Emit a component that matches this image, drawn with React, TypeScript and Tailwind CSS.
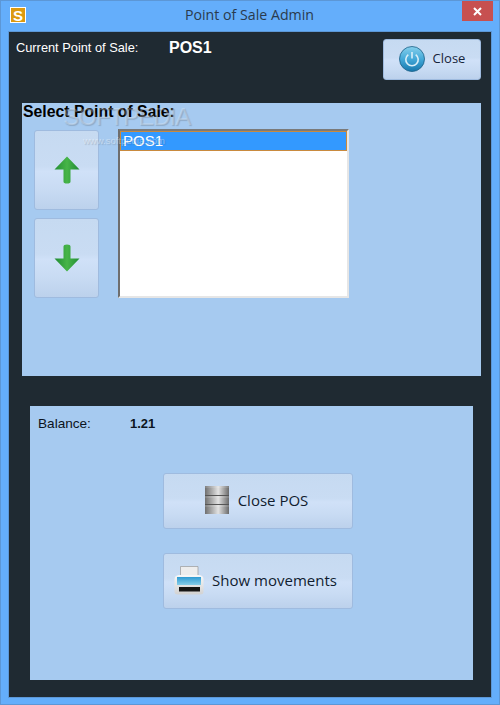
import React from "react";

const btn = "flex items-center justify-center rounded-[3px] border border-[#9fbbdf] bg-[linear-gradient(to_bottom,#c6daf1_0%,#c9dcf3_45%,#d0e1f8_52%,#c8dbf3_75%,#bcd1ec_100%)]";

function Arrow({ down }: { down?: boolean }) {
  const id = down ? "ad" : "au";
  return (
    <svg width="26" height="28" viewBox="0 0 26 28">
      <defs>
        <linearGradient id={id} x1="0" x2="1" y1="0" y2="0">
          <stop offset="0" stopColor="#238f35" />
          <stop offset="0.5" stopColor="#47b548" />
          <stop offset="1" stopColor="#1f8a33" />
        </linearGradient>
      </defs>
      <g transform={down ? "rotate(180 13 14)" : undefined}>
        <path d="M13 0.5 L25.5 13.5 H16.5 V25.5 Q16.5 27.5 13 27.5 Q9.5 27.5 9.5 25.5 V13.5 H0.5 Z" fill={`url(#${id})`} />
      </g>
    </svg>
  );
}

function PowerIcon() {
  return (
    <svg width="26" height="26" viewBox="0 0 26 26">
      <defs>
        <linearGradient id="pw" x1="0" x2="0" y1="0" y2="1">
          <stop offset="0" stopColor="#86d0ec" />
          <stop offset="0.5" stopColor="#44a9d9" />
          <stop offset="1" stopColor="#1677ac" />
        </linearGradient>
      </defs>
      <circle cx="13" cy="13" r="12.5" fill="url(#pw)" stroke="#1c5f86" strokeWidth="0.8" />
      <path d="M9.3 8.6 A6.2 6.2 0 1 0 16.7 8.6" fill="none" stroke="#d8eef8" strokeWidth="1.6" />
      <path d="M13 6 V12.5" fill="none" stroke="#d8eef8" strokeWidth="1.6" />
    </svg>
  );
}

function DbIcon() {
  return (
    <svg width="24" height="28" viewBox="0 0 24 28">
      <defs>
        <linearGradient id="db" x1="0" x2="1" y1="0" y2="0">
          <stop offset="0" stopColor="#6f6f6f" />
          <stop offset="0.55" stopColor="#e2e2e2" />
          <stop offset="1" stopColor="#6a6a6a" />
        </linearGradient>
      </defs>
      <rect x="0" y="0" width="24" height="28" fill="url(#db)" />
      <path d="M0 9.5 H24 M0 18.5 H24" stroke="#555" strokeWidth="1.2" />
      <path d="M0 1 H24 M0 11 H24 M0 20 H24" stroke="#fff" strokeOpacity="0.25" strokeWidth="1" />
    </svg>
  );
}

function PrinterIcon() {
  return (
    <svg width="30" height="29" viewBox="0 0 30 29">
      <defs>
        <linearGradient id="pr" x1="0" x2="0" y1="0" y2="1">
          <stop offset="0" stopColor="#f8f8f8" />
          <stop offset="1" stopColor="#d2d2d2" />
        </linearGradient>
        <linearGradient id="prb" x1="0" x2="0" y1="0" y2="1">
          <stop offset="0" stopColor="#2f9bd2" />
          <stop offset="1" stopColor="#86cde9" />
        </linearGradient>
      </defs>
      <path d="M6.5 0.5 H24 V10 H6.5 Z" fill="#ededed" stroke="#9a9a9a" strokeWidth="0.7" />
      <path d="M0.5 13 Q0.5 9.5 5 9 H25 Q29.5 9.5 29.5 13 V26 Q29.5 28.5 26 28.5 H4 Q0.5 28.5 0.5 26 Z" fill="url(#pr)" />
      <rect x="3" y="11" width="24" height="8" fill="url(#prb)" />
      <rect x="5" y="21" width="21" height="4.5" fill="#161616" />
    </svg>
  );
}

export default function App() {
  return (
    <div className="w-[500px] h-[705px] bg-[#64aefb] border border-[#5c97d6] flex flex-col font-['Liberation_Sans',sans-serif] overflow-hidden">
      <div className="relative h-[30px] shrink-0 flex items-center justify-center pr-[1px] pb-[1px]">
        <div className="absolute left-[9px] top-[6px] w-[16px] h-[16px] bg-[#dd9a10] border border-white flex items-center justify-center text-white font-bold text-[15px] leading-none">
          S
        </div>
        <span className="text-[14.2px] text-[#2a3b4d] font-['Open_Sans',sans-serif] leading-none">Point of Sale Admin</span>
        <div className="absolute right-[6px] top-0 w-[31px] h-[20px] bg-[#c75050] flex items-center justify-center">
          <svg width="9" height="9" viewBox="0 0 9 9">
            <path d="M1 1 L8 8 M8 1 L1 8" stroke="#fff" strokeWidth="2" />
          </svg>
        </div>
      </div>

      <div className="mx-[7px] h-[667px] bg-[#1f2a32] border border-[#5c97d6] flex flex-col">
        <div className="relative h-[71px] shrink-0">
          <div className="flex items-center pl-[7px] pt-[7px]">
            <span className="w-[153px] text-[12.8px] leading-[18px] text-white">Current Point of Sale:</span>
            <span className="text-[16px] leading-[18px] font-bold text-white">POS1</span>
          </div>
          <button className={`${btn} absolute right-[10px] top-[7px] w-[98px] h-[41px] gap-[8px] pb-[1px]`}>
            <PowerIcon />
            <span className="text-[13px] text-[#16243a] font-['Open_Sans',sans-serif]">Close</span>
          </button>
        </div>

        <div className="relative ml-[13px] mr-[10px] h-[273px] bg-[#a6caf0] shrink-0">
          <div className="pl-[1px] text-[15.8px] leading-[18px] font-bold text-black">Select Point of Sale:</div>
          <div className="flex mt-[8px] pl-[12px]">
            <div className="flex flex-col gap-[8px] pt-[1px]">
              <button className={`${btn} w-[65px] h-[80px]`}>
                <Arrow />
              </button>
              <button className={`${btn} w-[65px] h-[80px]`}>
                <Arrow down />
              </button>
            </div>
            <div className="ml-[19px] w-[231px] h-[169px] bg-white border-t-2 border-l-2 border-r-2 border-b-2 border-t-[#7a7a7a] border-l-[#6e6e6e] border-r-[#e6e6e6] border-b-[#e6e6e6]">
              <div className="h-[20px] bg-[#3399ff] border border-[#c98a3e] text-white text-[15px] leading-[18px] pl-[2px]">POS1</div>
            </div>
          </div>
          <div className="absolute left-[41px] top-[-1px] text-[24px] leading-[30px] text-white/25 [text-shadow:1px_1px_1px_rgba(60,60,60,0.22)] tracking-[-1px] pointer-events-none">SOFTPEDIA</div>
          <div className="absolute left-[61px] top-[32px] text-[9.5px] leading-[12px] text-white/40 [text-shadow:1px_1px_1px_rgba(60,60,60,0.2)] pointer-events-none">www.softpedia.com</div>
        </div>

        <div className="ml-[21px] mr-[18px] mt-[30px] h-[274px] bg-[#a6caf0] shrink-0 flex flex-col items-start">
          <div className="self-stretch flex items-center pl-[8px] pt-[9px]">
            <span className="w-[92px] text-[13.6px] leading-[18px] text-[#0c1420]">Balance:</span>
            <span className="text-[13px] leading-[18px] font-bold text-[#0c1420]">1.21</span>
          </div>
          <button className={`${btn} ml-[133px] mt-[40px] w-[190px] h-[56px] gap-[9px] pr-[3px] pb-[2px]`}>
            <DbIcon />
            <span className="text-[15px] text-[#111d30] font-['Open_Sans',sans-serif]">Close POS</span>
          </button>
          <button className={`${btn} ml-[133px] mt-[24px] w-[190px] h-[56px] gap-[8px] pr-[5px] pb-[2px]`}>
            <PrinterIcon />
            <span className="text-[15px] text-[#111d30] font-['Open_Sans',sans-serif]">Show movements</span>
          </button>
        </div>
      </div>
    </div>
  );
}
